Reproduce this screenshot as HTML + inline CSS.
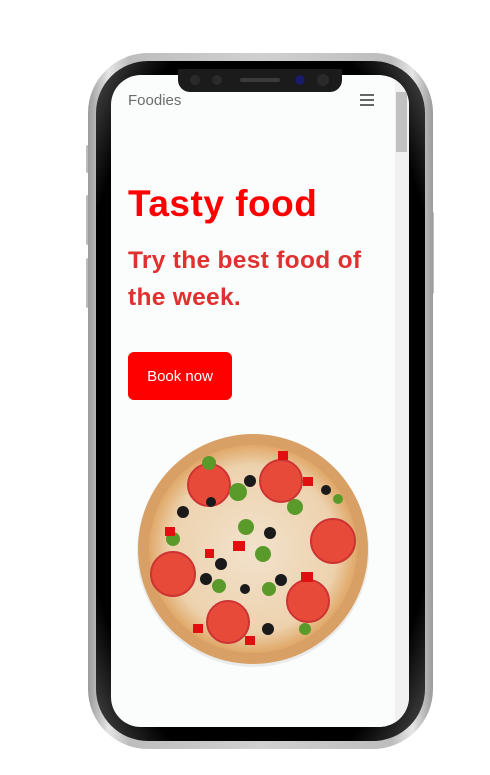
<!DOCTYPE html>
<html><head><meta charset="utf-8"><style>
*{margin:0;padding:0;box-sizing:border-box}
html,body{width:490px;height:775px;background:#fff;overflow:hidden;font-family:"Liberation Sans",sans-serif}
.outer{position:absolute;left:88px;top:53px;width:345px;height:696px;border-radius:60px;background:linear-gradient(90deg,#9a9a9a,#e6e6e6 6%,#bdbdbd 12%,#d0d0d0 50%,#bdbdbd 88%,#e6e6e6 94%,#9a9a9a)}
.bezel{position:absolute;left:96px;top:61px;width:329px;height:680px;border-radius:52px;background:radial-gradient(ellipse at center,#000 80%,#3a3a3a 95%,#777)}
.screen{position:absolute;left:111px;top:75px;width:298px;height:652px;border-radius:30px;background:#fbfcfc;overflow:hidden}
.btn{position:absolute;background:#bcbcbc;border-radius:2px}
.notch{position:absolute;left:178px;top:69px;width:164px;height:23px;background:#1b1b1b;border-radius:0 0 12px 12px}
.scroll{position:absolute;left:284px;top:0;width:14px;height:652px;background:#f1f1f1}
.thumb{position:absolute;left:285px;top:17px;width:11px;height:60px;background:#c1c1c1}
.logo{position:absolute;left:17px;top:17px;font-size:15px;color:#6c6c6c}
.menu{position:absolute;left:249px;top:19px;width:14px}
.menu i{display:block;height:2px;background:#666;margin-bottom:3px}
h1{position:absolute;left:17px;top:108px;font-size:37px;color:#f00;font-weight:bold;letter-spacing:.5px}
h2{position:absolute;left:17px;top:167px;font-size:24.5px;line-height:37px;color:#e03030;font-weight:bold;width:260px;letter-spacing:.3px}
.book{position:absolute;left:17px;top:277px;width:104px;height:48px;background:#f00;border-radius:6px;color:#fff;font-size:15px;text-align:center;line-height:49px}
</style></head><body>
<div class="btn" style="left:86px;top:145px;width:4px;height:28px"></div>
<div class="btn" style="left:86px;top:195px;width:4px;height:50px"></div>
<div class="btn" style="left:86px;top:258px;width:4px;height:50px"></div>
<div class="btn" style="left:430px;top:212px;width:4px;height:82px"></div>
<div class="outer"></div>
<div class="bezel"></div>
<div class="screen">
 <div class="logo">Foodies</div>
 <div class="menu"><i></i><i></i><i></i></div>
 <h1>Tasty food</h1>
 <h2>Try the best food of the week.</h2>
 <div class="book">Book now</div>
 <svg style="position:absolute;left:22px;top:354px" width="240" height="240" viewBox="0 0 240 240">
  <defs><radialGradient id="c" cx="50%" cy="50%" r="50%"><stop offset="0" stop-color="#f2e2cc"/><stop offset=".8" stop-color="#edd2ae"/><stop offset="1" stop-color="#e0a868"/></radialGradient></defs>
  <circle cx="120" cy="122" r="116" fill="#ccc" opacity=".35"/>
  <circle cx="120" cy="120" r="115" fill="#d9a066"/>
  <circle cx="120" cy="120" r="104" fill="url(#c)"/>
  <g fill="#e84a3a" stroke="#c33" stroke-width="2">
   <circle cx="76" cy="56" r="21"/><circle cx="148" cy="52" r="21"/>
   <circle cx="200" cy="112" r="22"/><circle cx="40" cy="145" r="22"/>
   <circle cx="95" cy="193" r="21"/><circle cx="175" cy="172" r="21"/>
  </g>
  <g fill="#1a1a1a"><circle cx="50" cy="83" r="6"/><circle cx="117" cy="52" r="6"/><circle cx="137" cy="104" r="6"/><circle cx="88" cy="135" r="6"/><circle cx="73" cy="150" r="6"/><circle cx="148" cy="151" r="6"/><circle cx="112" cy="160" r="5"/><circle cx="135" cy="200" r="6"/><circle cx="78" cy="73" r="5"/><circle cx="193" cy="61" r="5"/></g>
  <g fill="#5a9a2a"><circle cx="76" cy="34" r="7"/><circle cx="105" cy="63" r="9"/><circle cx="162" cy="78" r="8"/><circle cx="113" cy="98" r="8"/><circle cx="40" cy="110" r="7"/><circle cx="130" cy="125" r="8"/><circle cx="86" cy="157" r="7"/><circle cx="136" cy="160" r="7"/><circle cx="172" cy="200" r="6"/><circle cx="205" cy="70" r="5"/></g>
  <g fill="#e01010"><rect x="100" y="112" width="12" height="10"/><rect x="32" y="98" width="10" height="9"/><rect x="168" y="143" width="12" height="10"/><rect x="60" y="195" width="10" height="9"/><rect x="112" y="207" width="10" height="9"/><rect x="145" y="22" width="10" height="9"/><rect x="170" y="48" width="10" height="9"/><rect x="72" y="120" width="9" height="9"/></g>
 </svg>
 <div class="scroll"></div>
 <div class="thumb"></div>
</div>
<div class="notch">
 <div style="position:absolute;left:12px;top:6px;width:10px;height:10px;border-radius:50%;background:#2a2a2a"></div>
 <div style="position:absolute;left:34px;top:6px;width:10px;height:10px;border-radius:50%;background:#2a2a2a"></div>
 <div style="position:absolute;left:62px;top:9px;width:40px;height:4px;border-radius:2px;background:#3a3a3a"></div>
 <div style="position:absolute;left:117px;top:6px;width:10px;height:10px;border-radius:50%;background:#1a1a6a"></div>
 <div style="position:absolute;left:139px;top:5px;width:12px;height:12px;border-radius:50%;background:#2a2a2a"></div>
</div>
</body></html>
